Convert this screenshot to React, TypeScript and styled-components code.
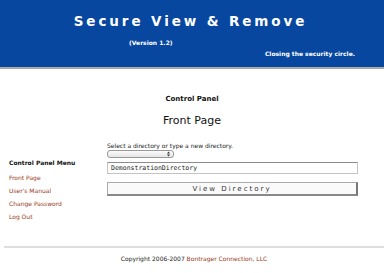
import React from "react";
import styled, { createGlobalStyle } from "styled-components";

const Global = createGlobalStyle`
  html, body { margin: 0; padding: 0; background: #ffffff; }
  body { font-family: "DejaVu Sans", Verdana, sans-serif; color: #111; }
`;

const Header = styled.header`
  height: 67px;
  background: #07479f;
  border-bottom: 2px solid #a9a9a9;
  color: #fff;
  display: flex;
  flex-direction: column;
`;

const Title = styled.h1`
  margin: 15px 0 0 0;
  font-size: 13.5px;
  line-height: 13px;
  font-weight: bold;
  letter-spacing: 2.9px;
  text-align: center;
  padding-right: 3px;
`;

const Version = styled.div`
  margin: 11px 0 0 129px;
  font-size: 6px;
  line-height: 8px;
  font-weight: bold;
`;

const Tagline = styled.div`
  margin: 3px 29px 0 0;
  align-self: flex-end;
  font-size: 6px;
  line-height: 8px;
  font-weight: bold;
`;

const Main = styled.main`
  height: 177px;
  display: flex;
  flex-direction: column;
`;

const PanelLabel = styled.div`
  margin-top: 26px;
  text-align: center;
  font-size: 7px;
  line-height: 9px;
  font-weight: bold;
`;

const PageTitle = styled.h2`
  margin: 10px 0 0 0;
  text-align: center;
  font-size: 11px;
  line-height: 14px;
  font-weight: normal;
`;

const Body = styled.div`
  display: flex;
  margin-top: 14px;
`;

const Menu = styled.nav`
  width: 107px;
  flex: none;
  padding: 17px 0 0 9px;
  display: flex;
  flex-direction: column;
  box-sizing: border-box;
`;

const MenuTitle = styled.div`
  font-size: 6px;
  line-height: 8px;
  font-weight: bold;
  margin-bottom: 4px;
`;

const MenuLink = styled.a`
  font-size: 6px;
  line-height: 13px;
  color: #9a3a1a;
  text-decoration: none;
`;

const Content = styled.form`
  width: 251px;
  margin: 0;
  display: flex;
  flex-direction: column;
`;

const Prompt = styled.div`
  font-size: 6px;
  line-height: 8px;
  color: #222;
`;

const SelectBox = styled.div`
  position: relative;
  width: 67px;
  height: 8px;
  border: 1px solid #9a9a9a;
  border-radius: 3px;
  background: linear-gradient(#fbfbfb, #e6e6e6);
  box-sizing: border-box;
`;

const SelectArrows = styled.svg`
  position: absolute;
  right: 3px;
  top: 0px;
  width: 3px;
  height: 6px;
`;

const Input = styled.input`
  margin: 4px 0 0 0;
  width: 251px;
  height: 12px;
  padding: 0 3px;
  font-family: "DejaVu Sans Mono", "Liberation Mono", monospace;
  font-size: 6.5px;
  line-height: 10px;
  color: #222;
  border: 1px solid #c4c4c4;
  border-top-color: #8c8c8c;
  box-sizing: border-box;
  background: #fff;
  outline: none;
`;

const Button = styled.button`
  margin-top: 8px;
  width: 251px;
  height: 14px;
  padding: 0;
  font-family: "DejaVu Sans", Verdana, sans-serif;
  font-size: 7px;
  line-height: 10px;
  letter-spacing: 2px;
  color: #333;
  background: #fafafa;
  border: 1px solid #aaa;
  border-right: 2px solid #777;
  border-bottom: 2px solid #888;
  box-sizing: border-box;
`;

const Footer = styled.footer`
  margin-left: 4px;
  border-top: 2px solid #dedede;
  height: 25px;
  border-bottom: 1px solid #f2f2f2;
  display: flex;
  justify-content: center;
  align-items: flex-start;
`;

const Copyright = styled.div`
  margin-top: 7px;
  font-size: 6px;
  line-height: 8px;
  color: #222;
`;

const CompanyLink = styled.a`
  color: #9a3a1a;
  text-decoration: none;
`;

export default function App() {
  return (
    <>
      <Global />
      <Header>
        <Title>Secure View &amp; Remove</Title>
        <Version>(Version 1.2)</Version>
        <Tagline>Closing the security circle.</Tagline>
      </Header>
      <Main>
        <PanelLabel>Control Panel</PanelLabel>
        <PageTitle>Front Page</PageTitle>
        <Body>
          <Menu>
            <MenuTitle>Control Panel Menu</MenuTitle>
            <MenuLink href="#">Front Page</MenuLink>
            <MenuLink href="#">User's Manual</MenuLink>
            <MenuLink href="#">Change Password</MenuLink>
            <MenuLink href="#">Log Out</MenuLink>
          </Menu>
          <Content onSubmit={(e) => e.preventDefault()}>
            <Prompt>Select a directory or type a new directory.</Prompt>
            <SelectBox role="listbox" aria-label="directory">
              <SelectArrows viewBox="0 0 3 6">
                <path d="M0 2.4 L1.5 0.6 L3 2.4 Z M0 3.6 L1.5 5.4 L3 3.6 Z" fill="#333" />
              </SelectArrows>
            </SelectBox>
            <Input defaultValue="DemonstrationDirectory" />
            <Button type="submit">View Directory</Button>
          </Content>
        </Body>
      </Main>
      <Footer>
        <Copyright>
          Copyright 2006-2007 <CompanyLink href="#">Bontrager Connection, LLC</CompanyLink>
        </Copyright>
      </Footer>
    </>
  );
}
